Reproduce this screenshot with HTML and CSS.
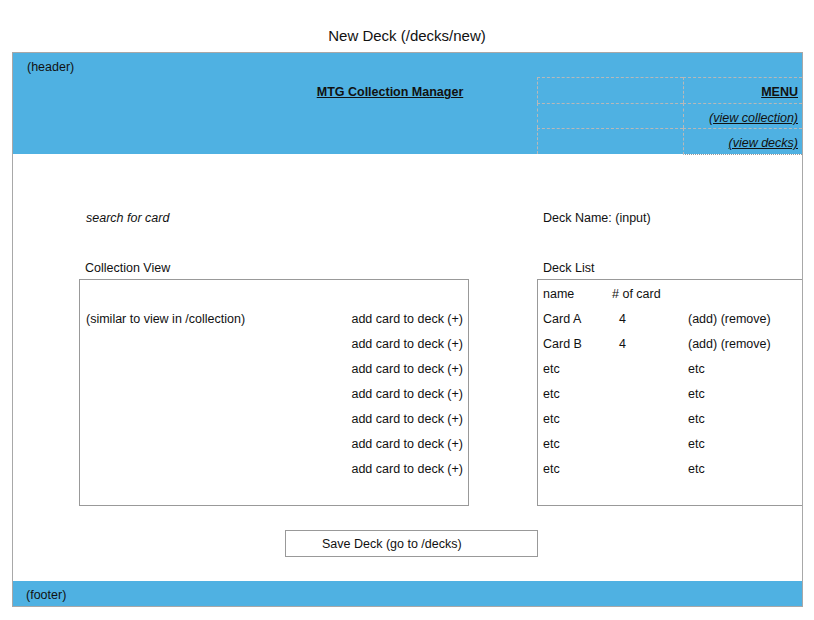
FILE: index.html
```html
<!DOCTYPE html>
<html>
<head>
<meta charset="utf-8">
<title>New Deck</title>
<link rel="stylesheet" href="styles.css">
</head>
<body>
<h1 class="page-title">New Deck (/decks/new)</h1>
<div class="frame">
  <header class="header">
    <div class="header-label">(header)</div>
    <div class="header-row">
      <div class="brand"><a>MTG Collection Manager</a></div>
      <div class="menu">
        <div class="cell empty"></div>
        <div class="cell link"><a class="menu-title">MENU</a></div>
        <div class="cell empty"></div>
        <div class="cell link"><a class="menu-link">(view collection)</a></div>
        <div class="cell empty last-left"></div>
        <div class="cell link last"><a class="menu-link">(view decks)</a></div>
      </div>
    </div>
  </header>
  <main class="main">
    <div class="columns">
      <section class="col">
        <div class="line search">search for card</div>
        <div class="spacer"></div>
        <div class="line label">Collection View</div>
        <div class="box">
          <div class="row"></div>
          <div class="row split"><span>(similar to view in /collection)</span><span>add card to deck (+)</span></div>
          <div class="row split"><span></span><span>add card to deck (+)</span></div>
          <div class="row split"><span></span><span>add card to deck (+)</span></div>
          <div class="row split"><span></span><span>add card to deck (+)</span></div>
          <div class="row split"><span></span><span>add card to deck (+)</span></div>
          <div class="row split"><span></span><span>add card to deck (+)</span></div>
          <div class="row split"><span></span><span>add card to deck (+)</span></div>
        </div>
      </section>
      <section class="col">
        <div class="line label">Deck Name: (input)</div>
        <div class="spacer"></div>
        <div class="line label">Deck List</div>
        <div class="box deck-box">
          <div class="deck-row"><span>name</span><span># of card</span><span></span></div>
          <div class="deck-row"><span>Card A</span><span class="num">4</span><span>(add) (remove)</span></div>
          <div class="deck-row"><span>Card B</span><span class="num">4</span><span>(add) (remove)</span></div>
          <div class="deck-row"><span>etc</span><span></span><span>etc</span></div>
          <div class="deck-row"><span>etc</span><span></span><span>etc</span></div>
          <div class="deck-row"><span>etc</span><span></span><span>etc</span></div>
          <div class="deck-row"><span>etc</span><span></span><span>etc</span></div>
          <div class="deck-row"><span>etc</span><span></span><span>etc</span></div>
        </div>
      </section>
    </div>
    <div class="save">Save Deck (go to /decks)</div>
  </main>
  <footer class="footer">(footer)</footer>
</div>
</body>
</html>
```

FILE: styles.css
```css
* { box-sizing: border-box; }
html, body { margin: 0; padding: 0; background: #fff; }
body {
  font-family: "Liberation Sans", Arial, Helvetica, sans-serif;
  font-size: 12.5px;
  color: #111;
}
.page-title {
  margin: 0;
  height: 52px;
  padding-top: 27px;
  font-size: 15px;
  line-height: 18px;
  font-weight: normal;
  text-align: center;
}
.frame {
  margin-left: 12px;
  width: 791px;
  height: 555px;
  border: 1px solid #a8a8a8;
  display: flex;
  flex-direction: column;
}
.header {
  height: 101px;
  flex: none;
  background: #4fb1e2;
  display: flex;
  flex-direction: column;
}
.header-label {
  height: 24px;
  padding: 7px 0 0 14px;
  line-height: 14px;
}
.header-row {
  display: flex;
}
.brand {
  flex: 1;
  padding-left: 230px;
  padding-top: 2px;
  text-align: center;
  line-height: 26px;
  font-weight: bold;
}
.brand a, .menu a { text-decoration: underline; color: #111; }
.menu {
  width: 265px;
  display: grid;
  grid-template-columns: 146px 1fr;
  grid-template-rows: 26px 25px 26px;
}
.cell {
  border-top: 1px dashed #b8b8b8;
  border-left: 1px dashed #b8b8b8;
}
.cell.link {
  text-align: right;
  padding-right: 4px;
  padding-top: 2px;
  line-height: 24px;
}
.cell.last {
  border-bottom: 1px dotted #999;
  height: 27px;
}
.menu-title { font-weight: bold; }
.menu-link { font-style: italic; }
.main {
  flex: 1;
  padding-top: 50px;
}
.columns {
  display: grid;
  grid-template-columns: 390px 1fr;
  column-gap: 68px;
  padding-left: 66px;
}
.line {
  height: 25px;
  line-height: 25px;
  padding-top: 2px;
  padding-left: 6px;
}
.search { font-style: italic; padding-left: 7px; }
.spacer { height: 25px; }
.box {
  height: 227px;
  border: 1px solid #999;
}
.deck-box { border-right: none; }
.row {
  height: 25px;
  line-height: 25px;
  padding-top: 2px;
}
.split {
  display: flex;
  justify-content: space-between;
  padding: 2px 5px 0 6px;
}
.deck-row {
  display: grid;
  grid-template-columns: 69px 76px 1fr;
  height: 25px;
  line-height: 25px;
  padding-top: 2px;
  padding-left: 5px;
}
.num { padding-left: 7px; }
.save {
  margin: 24px 0 0 272px;
  width: 253px;
  height: 27px;
  border: 1px solid #999;
  line-height: 25px;
  padding-top: 1px;
  padding-left: 36px;
}
.footer {
  height: 25px;
  flex: none;
  background: #4fb1e2;
  line-height: 25px;
  padding-top: 2px;
  padding-left: 13px;
}
```
